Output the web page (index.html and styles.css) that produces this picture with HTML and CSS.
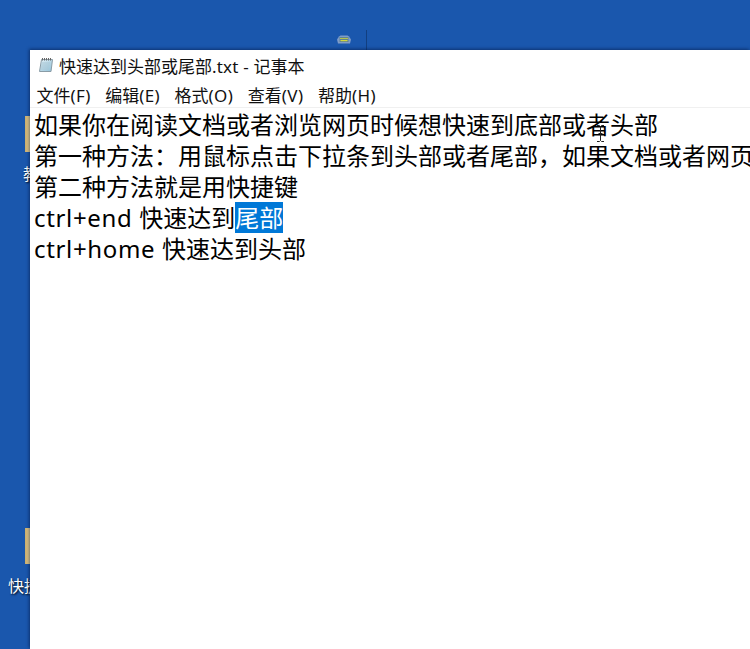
FILE: index.html
```html
<!DOCTYPE html>
<html lang="zh-CN">
<head>
<meta charset="utf-8">
<title>记事本</title>
<link rel="stylesheet" href="styles.css">
</head>
<body>
<div class="desktop">
  <svg class="tray-icon" width="14" height="10" viewBox="0 0 14 10"><path d="M2 1.500 3.500 .5h7L12 1.500l2 3-1 4H1l-1-4z" fill="#7f9cc8"/><rect x="2.500" y="2" width="9" height="5" fill="#5f8193"/><rect x="3" y="3" width="8" height="1" fill="#b4c24e"/><rect x="3.500" y="5" width="7" height="1.200" fill="#d2d83e"/></svg>
  <div class="tick"></div>
  <div class="folder folder-top"></div>
  <div class="desk-label label-top">教</div>
  <div class="folder folder-bottom"></div>
  <div class="desk-label label-bottom">快捷</div>

  <section class="window">
    <header class="titlebar">
      <svg class="note-icon" width="16" height="16" viewBox="0 0 16 16">
        <defs><linearGradient id="page" x1="0" y1="0" x2="1" y2="1"><stop offset="0" stop-color="#e4f1f6"/><stop offset="1" stop-color="#8fc0d8"/></linearGradient></defs>
        <path d="M3.500 2.500h11l-1.500 12H1.500z" fill="url(#page)" stroke="#8a9ca6" stroke-width="1"/>
        <path d="M3.500 6h8.500M3.200 8h8.500M3 10h8.500M2.700 12h8.500" stroke="#a9c6d4" stroke-width="1"/>
        <path d="M4.500 1v2.500M6.500 1v2.500M8.500 1v2.500M10.500 1v2.500M12.500 1v2.500" stroke="#666" stroke-width="1"/>
      </svg>
      <span class="title">快速达到头部或尾部<span class="lat-title">.txt - </span>记事本</span>
    </header>
    <nav class="menubar">
      <span>文件<span class="lat-menu">(F)</span></span>
      <span>编辑<span class="lat-menu">(E)</span></span>
      <span>格式<span class="lat-menu">(O)</span></span>
      <span>查看<span class="lat-menu">(V)</span></span>
      <span>帮助<span class="lat-menu">(H)</span></span>
    </nav>
    <main class="editor">
      <div class="line">如果你在阅读文档或者浏览网页时候想快速到底部或者头部</div>
      <div class="line">第一种方法：用鼠标点击下拉条到头部或者尾部，如果文档或者网页太长就不方便</div>
      <div class="line">第二种方法就是用快捷键</div>
      <div class="line"><span class="lat">ctrl+end </span>快速达到<span class="sel">尾部</span></div>
      <div class="line"><span class="lat">ctrl+home </span>快速达到头部</div>
      <svg class="ibeam" width="9" height="17" viewBox="0 0 9 17"><path d="M1 .5h2.500l1 1 1-1H8M4.500 1.500v14M1 16.500h2.500l1-1 1 1H8M2.500 8.500h4" fill="none" stroke="#222" stroke-width="1"/></svg>
    </main>
  </section>
</div>
</body>
</html>
```

FILE: styles.css
```css
* { box-sizing: border-box; }
html, body { margin: 0; height: 100%; overflow: hidden; }
body { font-family: "Noto Sans", "Noto Sans CJK SC", sans-serif; }

.desktop {
  position: relative;
  width: 750px;
  height: 649px;
  background: #1a57ad;
  overflow: hidden;
}

.tray-icon { position: absolute; left: 337px; top: 35px; }
.tick { position: absolute; left: 366px; top: 30px; width: 1px; height: 20px; background: #123f80; }

.folder {
  position: absolute;
  left: 25px;
  width: 5px;
  background: linear-gradient(90deg, #c9ad6c, #f0d999);
}
.folder-top { top: 116px; height: 36px; }
.folder-bottom { top: 528px; height: 36px; }

.desk-label {
  position: absolute;
  color: #fff;
  font-size: 16px;
  line-height: 20px;
  white-space: nowrap;
  text-shadow: 1px 1px 2px #000;
}
.label-top { left: 23px; top: 164px; }
.label-bottom { left: 8px; top: 576px; }

.window {
  position: absolute;
  left: 30px;
  top: 50px;
  width: 720px;
  height: 599px;
  display: flex;
  flex-direction: column;
  background: #fff;
  box-shadow: -1px -1px 3px rgba(0, 20, 60, .55);
}

.titlebar {
  display: flex;
  align-items: center;
  gap: 5px;
  height: 32px;
  padding: 0 0 2px 8px;
  font-size: 17px;
  color: #111;
  flex: none;
}
.note-icon { flex: none; }
.title { white-space: nowrap; }
.lat-title { letter-spacing: .2px; white-space: pre; }

.menubar {
  display: flex;
  gap: 14.5px;
  height: 26px;
  padding: 2px 0 0 6.5px;
  align-items: center;
  font-size: 17px;
  color: #111;
  border-bottom: 1px solid #f0f0f0;
  flex: none;
}
.menubar span { line-height: 25px; }
.menubar .lat-menu { letter-spacing: .4px; }

.editor {
  position: relative;
  flex: 1;
  padding: 1px 0 0 4px;
  font-size: 24px;
  color: #000;
  overflow: hidden;
}
.line { white-space: pre; height: 31px; line-height: 31px; }
.lat { letter-spacing: .65px; }
.sel { background: #0078d7; color: #fff; display: inline-block; height: 31px; line-height: 31px; vertical-align: top; }
.ibeam { position: absolute; left: 566px; top: 17px; }
```
